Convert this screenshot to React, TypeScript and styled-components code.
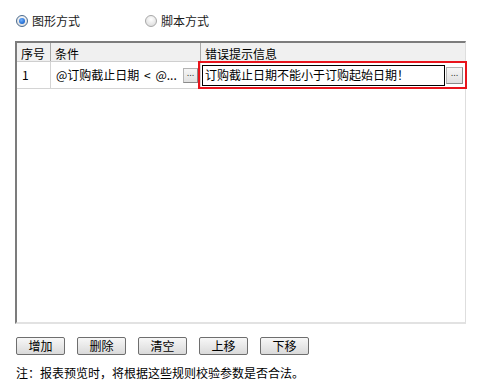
import React from 'react';
import styled, { createGlobalStyle } from 'styled-components';

const GlobalStyle = createGlobalStyle`
  body {
    margin: 0;
    background: #ffffff;
    font-family: "Noto Sans CJK SC", "Liberation Sans", sans-serif;
    font-size: 12px;
    color: #000000;
  }
`;

interface Rule {
  no: number;
  condition: string;
  message: string;
}

const rules: Rule[] = [
  { no: 1, condition: '@订购截止日期 < @...', message: '订购截止日期不能小于订购起始日期！' },
];

const buttons = ['增加', '删除', '清空', '上移', '下移'];

const App: React.FC = () => {
  return (
    <Page>
      <GlobalStyle />
      <ModeRow>
        <ModeOption>
          <RadioDot checked />
          <span>图形方式</span>
        </ModeOption>
        <ModeOption>
          <RadioDot />
          <span>脚本方式</span>
        </ModeOption>
      </ModeRow>

      <Grid>
        <HeaderRow>
          <HeaderCell>序号</HeaderCell>
          <HeaderCell>条件</HeaderCell>
          <HeaderCell last>错误提示信息</HeaderCell>
        </HeaderRow>
        {rules.map((rule) => (
          <DataRow key={rule.no}>
            <NoCell>{rule.no}</NoCell>
            <CondCell>
              <CondText>{rule.condition}</CondText>
              <EllipsisButton small>...</EllipsisButton>
            </CondCell>
            <MessageCell>
              <EditFrame>
                <EditInput>{rule.message}</EditInput>
                <EllipsisButton>...</EllipsisButton>
              </EditFrame>
            </MessageCell>
          </DataRow>
        ))}
      </Grid>

      <ButtonBar>
        {buttons.map((b) => (
          <ActionButton key={b}>{b}</ActionButton>
        ))}
      </ButtonBar>

      <Note>注：报表预览时，将根据这些规则校验参数是否合法。</Note>
    </Page>
  );
};

export default App;

const Page = styled.div`
  padding: 14px 0 0 15px;
  width: 451px;
`;

const ModeRow = styled.div`
  display: flex;
  align-items: center;
  height: 14px;
  padding-left: 1px;
`;

const ModeOption = styled.label`
  display: flex;
  align-items: center;
  gap: 4px;
  width: 129px;
  line-height: 14px;
  color: #1a1a1a;
`;

const RadioDot = styled.span<{ checked?: boolean }>`
  position: relative;
  display: inline-block;
  box-sizing: border-box;
  width: 12px;
  height: 12px;
  border-radius: 50%;
  border: 1px solid ${(p) => (p.checked ? '#4a6b8f' : '#a8a8a8')};
  background: radial-gradient(circle at 50% 35%, #ffffff 0%, #d6d6d6 100%);
  &::after {
    content: '';
    position: absolute;
    left: 2px;
    top: 2px;
    width: 6px;
    height: 6px;
    border-radius: 50%;
    background: ${(p) =>
      p.checked ? 'radial-gradient(circle at 40% 35%, #6fb0ff 0%, #1560c8 80%)' : 'transparent'};
  }
`;

const Grid = styled.div`
  margin-top: 13px;
  box-sizing: border-box;
  height: 283px;
  border-top: 2px solid #7c7c7c;
  border-left: 2px solid #7c7c7c;
  border-right: 1px solid #dedede;
  border-bottom: 2px solid #e2e2e2;
  background: #ffffff;
`;

const HeaderRow = styled.div`
  display: grid;
  grid-template-columns: 34px 150px 1fr;
  height: 19px;
  background: #f0f0f0;
  border-bottom: 1px solid #cfcfcf;
  box-sizing: border-box;
`;

const HeaderCell = styled.div<{ last?: boolean }>`
  display: flex;
  align-items: center;
  padding-left: 4px;
  line-height: 14px;
  border-right: ${(p) => (p.last ? 'none' : '1px solid #a9a9a9')};
  padding-top: 3px;
`;

const DataRow = styled.div`
  display: grid;
  grid-template-columns: 34px 150px 1fr;
  height: 27px;
  box-sizing: border-box;
  border-bottom: 1px solid #d4d4d4;
`;

const NoCell = styled.div`
  display: flex;
  align-items: center;
  padding-left: 5px;
  border-right: 1px solid #d4d4d4;
  line-height: 14px;
`;

const CondCell = styled.div`
  display: flex;
  align-items: center;
  padding: 0 2px 0 5px;
  border-right: 1px solid #d4d4d4;
  gap: 3px;
`;

const CondText = styled.span`
  flex: 1;
  white-space: nowrap;
  line-height: 14px;
  word-spacing: 2px;
`;

const MessageCell = styled.div`
  position: relative;
`;

const EditFrame = styled.div`
  position: absolute;
  left: -3px;
  right: -2px;
  top: -1px;
  bottom: -1px;
  border: 2px solid #e8141c;
  display: flex;
  align-items: center;
  gap: 1px;
  padding: 0 2px 0 2px;
  box-sizing: border-box;
`;

const EditInput = styled.div`
  flex: 1;
  height: 21px;
  box-sizing: border-box;
  border: 1px solid #000000;
  display: flex;
  align-items: center;
  padding-left: 2px;
  line-height: 14px;
  white-space: nowrap;
`;

const EllipsisButton = styled.span<{ small?: boolean }>`
  display: flex;
  align-items: center;
  justify-content: center;
  box-sizing: border-box;
  flex-shrink: 0;
  width: ${(p) => (p.small ? '15px' : '17px')};
  height: ${(p) => (p.small ? '15px' : '17px')};
  padding-bottom: 2px;
  border: 1px solid #b4b4b4;
  border-right-color: #8a8a8a;
  border-bottom-color: #8a8a8a;
  background: linear-gradient(#f6f6f6, #e0e0e0);
  font-family: "DejaVu Sans", sans-serif;
  font-size: 8px;
  line-height: 8px;
  color: #1a1a1a;
`;

const ButtonBar = styled.div`
  display: flex;
  gap: 12px;
  margin-top: 13px;
  padding-left: 1px;
`;

const ActionButton = styled.button`
  box-sizing: border-box;
  width: 49px;
  height: 18px;
  padding: 0;
  border: 1px solid #6e6e6e;
  border-radius: 2px;
  background: linear-gradient(#f7f7f7, #dadada);
  font-family: "Noto Sans CJK SC", "Liberation Sans", sans-serif;
  font-size: 12px;
  line-height: 14px;
  color: #000000;
`;

const Note = styled.div`
  margin-top: 11px;
  padding-left: 1px;
  line-height: 14px;
`;
